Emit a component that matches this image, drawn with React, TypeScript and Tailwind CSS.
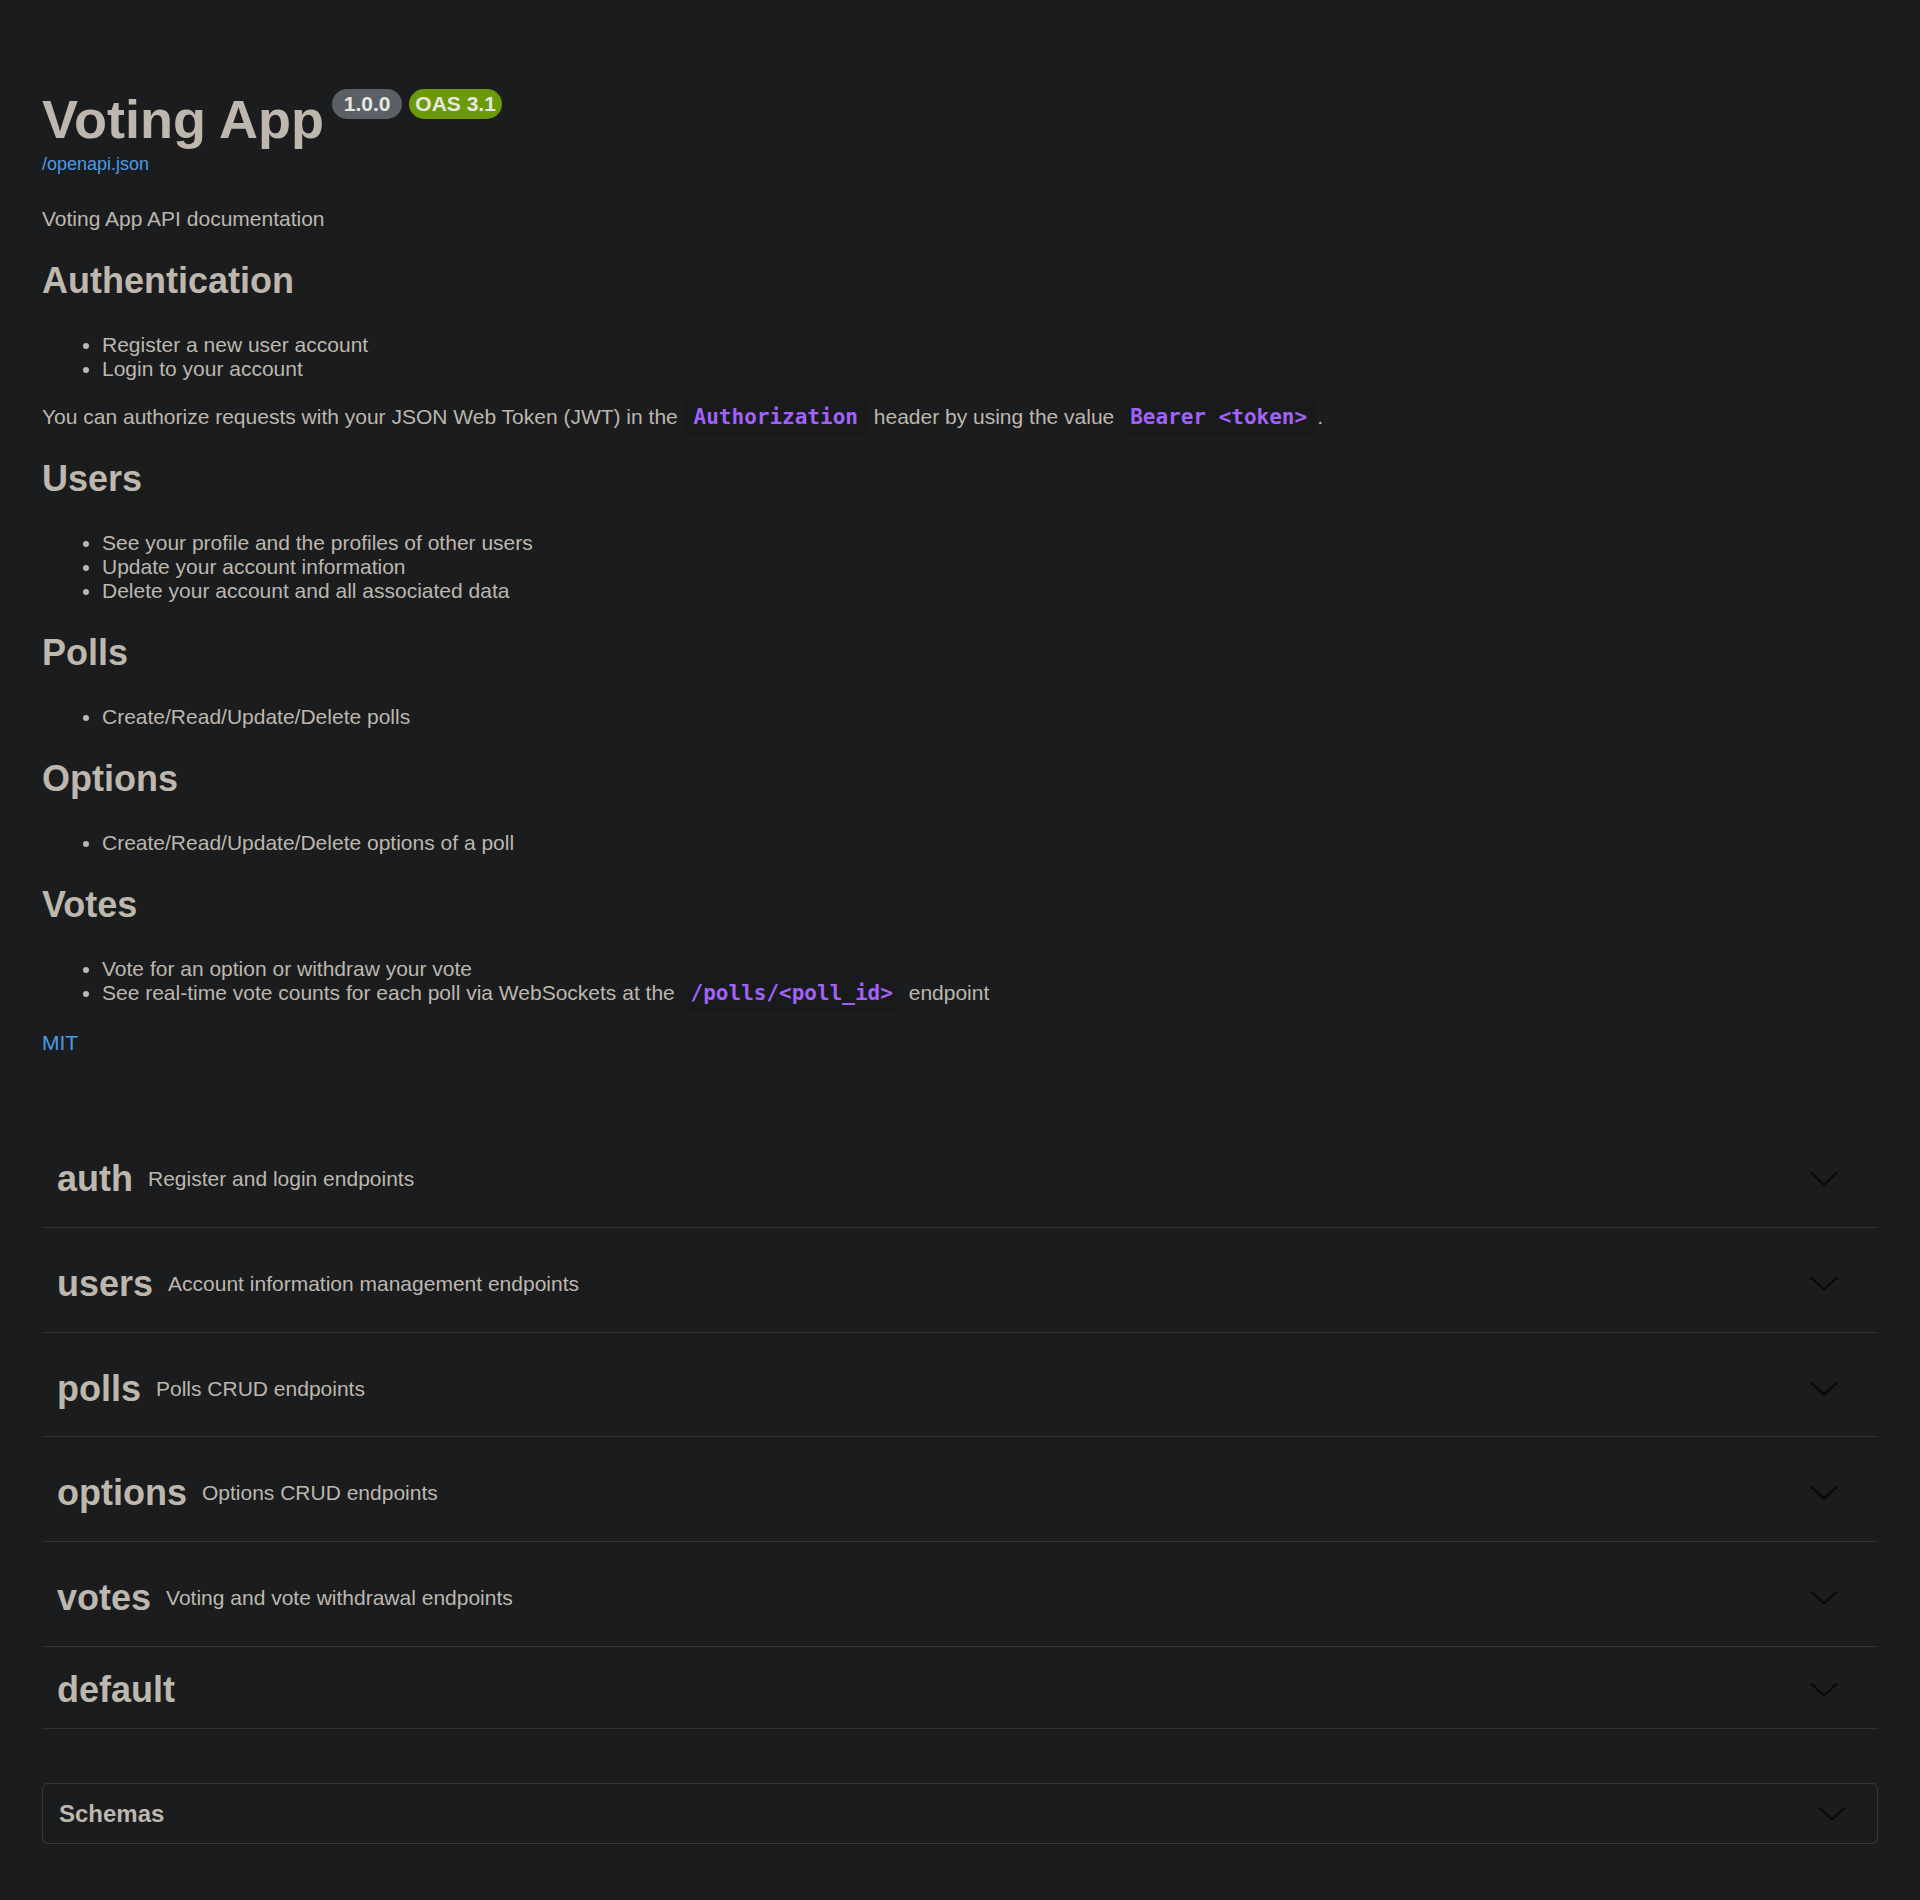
import React from "react";

const Chevron = ({ className = "" }: { className?: string }) => (
  <svg width="28" height="15" viewBox="0 0 28 15" className={className} fill="none">
    <polyline points="1,1.5 14,13.5 27,1.5" stroke="#0a0a0a" strokeWidth="2.3" strokeLinejoin="miter" />
  </svg>
);

const Code = ({ children }: { children: React.ReactNode }) => (
  <code className="rounded-[6px] bg-black/[0.06] px-[10px] py-[7px] font-['DejaVu_Sans_Mono',monospace] text-[21px] font-bold leading-[24px] text-[#a163f7]">
    {children}
  </code>
);

const H2 = ({ children }: { children: React.ReactNode }) => (
  <h2 className="mt-[29px] text-[36px] font-bold leading-[41px] text-[#bdb7ae]">{children}</h2>
);

const UL = ({ children }: { children: React.ReactNode }) => (
  <ul className="mt-[32px] list-disc pl-[60px] text-[21px] leading-[24px] marker:text-[#bdb7ae]">{children}</ul>
);

const tags = [
  { name: "auth", desc: "Register and login endpoints" },
  { name: "users", desc: "Account information management endpoints" },
  { name: "polls", desc: "Polls CRUD endpoints" },
  { name: "options", desc: "Options CRUD endpoints" },
  { name: "votes", desc: "Voting and vote withdrawal endpoints" },
];

export default function App() {
  return (
    <div className="min-h-[1900px] w-full bg-[#1b1c1e] font-['Liberation_Sans',Arial,sans-serif] text-[#bdb7ae]">
      <div className="px-[42px] pt-[88px] pb-[40px]">
        {/* Title */}
        <div className="flex items-start">
          <h1 className="text-[54px] font-bold leading-[62px] text-[#bdb7ae]">Voting App</h1>
          <span className="ml-[8px] mt-[1px] flex h-[30px] items-center rounded-full bg-[#5a6065] px-[6px] text-[21px] font-bold text-[#e8e6e3] whitespace-pre">
            {" 1.0.0 "}
          </span>
          <span className="ml-[7px] mt-[1px] flex h-[30px] items-center rounded-full bg-[#6b9a06] px-[6px] text-[21px] font-bold text-[#e8e6e3]">
            OAS 3.1
          </span>
        </div>
        <a className="mt-[4px] block text-[18px] leading-[21px] text-[#4a9ce6]">/openapi.json</a>

        <p className="mt-[32px] text-[21px] leading-[24px]">Voting App API documentation</p>

        <H2>Authentication</H2>
        <UL>
          <li>Register a new user account</li>
          <li>Login to your account</li>
        </UL>
        <p className="mt-[24px] text-[21px] leading-[24px]">
          You can authorize requests with your JSON Web Token (JWT) in the <Code>Authorization</Code> header by using
          the value <Code>Bearer &lt;token&gt;</Code>.
        </p>

        <H2>Users</H2>
        <UL>
          <li>See your profile and the profiles of other users</li>
          <li>Update your account information</li>
          <li>Delete your account and all associated data</li>
        </UL>

        <H2>Polls</H2>
        <UL>
          <li>Create/Read/Update/Delete polls</li>
        </UL>

        <H2>Options</H2>
        <UL>
          <li>Create/Read/Update/Delete options of a poll</li>
        </UL>

        <H2>Votes</H2>
        <UL>
          <li>Vote for an option or withdraw your vote</li>
          <li>
            See real-time vote counts for each poll via WebSockets at the <Code>/polls/&lt;poll_id&gt;</Code> endpoint
          </li>
        </UL>

        <a className="mt-[26px] block text-[21px] leading-[24px] text-[#4a9ce6]">MIT</a>

        {/* Tags */}
        <div className="mt-[75.5px]">
          {tags.map((t) => (
            <div
              key={t.name}
              className="mb-[7.5px] flex h-[97.25px] items-center border-b border-[#303336] pl-[15px] pr-[40px]"
            >
              <span className="text-[36px] font-bold leading-[43px] text-[#bdb7ae]">{t.name}</span>
              <span className="pl-[15px] text-[21px] leading-[31px] text-[#bdb7ae]">{t.desc}</span>
              <Chevron className="ml-auto" />
            </div>
          ))}
          <div className="flex h-[74.5px] items-center border-b border-[#303336] pb-[4px] pl-[15px] pr-[40px]">
            <span className="text-[36px] font-bold leading-[43px] text-[#bdb7ae]">default</span>
            <Chevron className="ml-auto" />
          </div>
        </div>

        {/* Schemas */}
        <div className="mt-[54px] flex h-[61px] items-center rounded-[6px] border border-[#37393c] pl-[16px] pr-[31px]">
          <span className="text-[24px] font-bold leading-[29px] text-[#bdb7ae]">Schemas</span>
          <Chevron className="ml-auto" />
        </div>
      </div>
    </div>
  );
}
